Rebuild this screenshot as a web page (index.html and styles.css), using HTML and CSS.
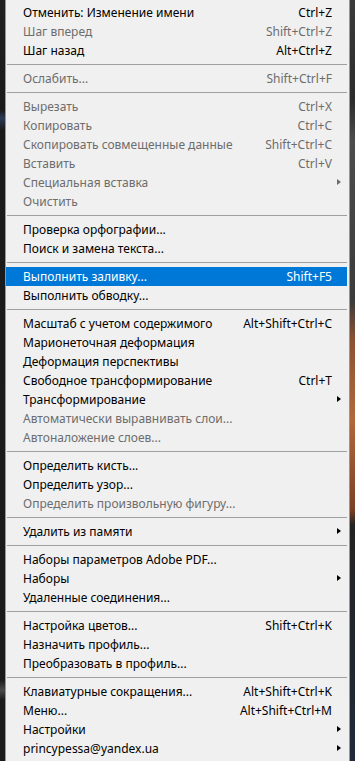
FILE: index.html
```html
<!DOCTYPE html>
<html lang="ru">
<head>
    <meta charset="UTF-8">
    <meta name="viewport" content="width=device-width, initial-scale=1.0">
    <title>Редактирование</title>
    <link rel="stylesheet" href="styles.css">
</head>
<body>
    <div class="screen">
        <div class="edge edge-left"></div>

        <div class="menu">
            <div class="menu-item"><span class="label">Отменить: Изменение имени</span><span class="shortcut">Ctrl+Z</span><span class="arrow"></span></div>
            <div class="menu-item disabled"><span class="label">Шаг вперед</span><span class="shortcut">Shift+Ctrl+Z</span><span class="arrow"></span></div>
            <div class="menu-item"><span class="label">Шаг назад</span><span class="shortcut">Alt+Ctrl+Z</span><span class="arrow"></span></div>
            <div class="separator"></div>

            <div class="menu-item disabled"><span class="label">Ослабить...</span><span class="shortcut">Shift+Ctrl+F</span><span class="arrow"></span></div>
            <div class="separator"></div>

            <div class="menu-item disabled"><span class="label">Вырезать</span><span class="shortcut">Ctrl+X</span><span class="arrow"></span></div>
            <div class="menu-item disabled"><span class="label">Копировать</span><span class="shortcut">Ctrl+C</span><span class="arrow"></span></div>
            <div class="menu-item disabled"><span class="label">Скопировать совмещенные данные</span><span class="shortcut">Shift+Ctrl+C</span><span class="arrow"></span></div>
            <div class="menu-item disabled"><span class="label">Вставить</span><span class="shortcut">Ctrl+V</span><span class="arrow"></span></div>
            <div class="menu-item disabled"><span class="label">Специальная вставка</span><span class="shortcut"></span><span class="arrow has-sub"></span></div>
            <div class="menu-item disabled"><span class="label">Очистить</span><span class="shortcut"></span><span class="arrow"></span></div>
            <div class="separator"></div>

            <div class="menu-item"><span class="label">Проверка орфографии...</span><span class="shortcut"></span><span class="arrow"></span></div>
            <div class="menu-item"><span class="label">Поиск и замена текста...</span><span class="shortcut"></span><span class="arrow"></span></div>
            <div class="separator"></div>

            <div class="menu-item selected"><span class="label">Выполнить заливку...</span><span class="shortcut">Shift+F5</span><span class="arrow"></span></div>
            <div class="menu-item"><span class="label">Выполнить обводку...</span><span class="shortcut"></span><span class="arrow"></span></div>
            <div class="separator"></div>

            <div class="menu-item"><span class="label">Масштаб с учетом содержимого</span><span class="shortcut">Alt+Shift+Ctrl+C</span><span class="arrow"></span></div>
            <div class="menu-item"><span class="label">Марионеточная деформация</span><span class="shortcut"></span><span class="arrow"></span></div>
            <div class="menu-item"><span class="label">Деформация перспективы</span><span class="shortcut"></span><span class="arrow"></span></div>
            <div class="menu-item"><span class="label">Свободное трансформирование</span><span class="shortcut">Ctrl+T</span><span class="arrow"></span></div>
            <div class="menu-item"><span class="label">Трансформирование</span><span class="shortcut"></span><span class="arrow has-sub"></span></div>
            <div class="menu-item disabled"><span class="label">Автоматически выравнивать слои...</span><span class="shortcut"></span><span class="arrow"></span></div>
            <div class="menu-item disabled"><span class="label">Автоналожение слоев...</span><span class="shortcut"></span><span class="arrow"></span></div>
            <div class="separator"></div>

            <div class="menu-item"><span class="label">Определить кисть...</span><span class="shortcut"></span><span class="arrow"></span></div>
            <div class="menu-item"><span class="label">Определить узор...</span><span class="shortcut"></span><span class="arrow"></span></div>
            <div class="menu-item disabled"><span class="label">Определить произвольную фигуру...</span><span class="shortcut"></span><span class="arrow"></span></div>
            <div class="separator"></div>

            <div class="menu-item"><span class="label">Удалить из памяти</span><span class="shortcut"></span><span class="arrow has-sub"></span></div>
            <div class="separator"></div>

            <div class="menu-item"><span class="label">Наборы параметров Adobe PDF...</span><span class="shortcut"></span><span class="arrow"></span></div>
            <div class="menu-item"><span class="label">Наборы</span><span class="shortcut"></span><span class="arrow has-sub"></span></div>
            <div class="menu-item"><span class="label">Удаленные соединения...</span><span class="shortcut"></span><span class="arrow"></span></div>
            <div class="separator"></div>

            <div class="menu-item"><span class="label">Настройка цветов...</span><span class="shortcut">Shift+Ctrl+K</span><span class="arrow"></span></div>
            <div class="menu-item"><span class="label">Назначить профиль...</span><span class="shortcut"></span><span class="arrow"></span></div>
            <div class="menu-item"><span class="label">Преобразовать в профиль...</span><span class="shortcut"></span><span class="arrow"></span></div>
            <div class="separator"></div>

            <div class="menu-item"><span class="label">Клавиатурные сокращения...</span><span class="shortcut">Alt+Shift+Ctrl+K</span><span class="arrow"></span></div>
            <div class="menu-item"><span class="label">Меню...</span><span class="shortcut">Alt+Shift+Ctrl+M</span><span class="arrow"></span></div>
            <div class="menu-item"><span class="label">Настройки</span><span class="shortcut"></span><span class="arrow has-sub"></span></div>
            <div class="menu-item"><span class="label">princypessa@yandex.ua</span><span class="shortcut"></span><span class="arrow has-sub"></span></div>
        </div>

        <div class="edge edge-right"></div>
    </div>
</body>
</html>
```

FILE: styles.css
```css
:root {
    --menu-bg: #f0f0f0;
    --menu-border: #979797;
    --text-color: #000000;
    --disabled-color: #6d6d6d;
    --highlight: #0078d7;
    --row-height: 19px;
}

body {
    margin: 0;
    background-color: #1c1c1c;
    font-family: "Noto Sans", "Open Sans", sans-serif;
    font-size: 12px;
    overflow: hidden;
}

.screen {
    display: flex;
    height: 761px;
    width: 355px;
}

.edge {
    width: 5px;
    flex-shrink: 0;
}

.edge-left {
    background: linear-gradient(to bottom, #202020 0, #1a1a1a 110px, #2b3a55 118px, #1a1a1a 130px, #1b1b1b 680px, #4a4a4a 690px, #1b1b1b 700px);
}

.edge-right {
    background: linear-gradient(to bottom, #3a3a3a 0, #2c2c2c 100px, #4c4c4c 140px, #3b3b3b 300px, #8a5233 340px, #b0683c 420px, #7a3f26 510px, #232323 525px, #1f2a3a 761px);
}

.menu {
    flex: 1;
    background-color: var(--menu-bg);
    border-left: 1px solid var(--menu-border);
    border-right: 1px solid var(--menu-border);
    padding: 3px 2px 3px 0;
    display: flex;
    flex-direction: column;
}

.menu-item {
    display: flex;
    align-items: center;
    height: var(--row-height);
    padding-left: 17px;
    color: var(--text-color);
    white-space: nowrap;
}

.menu-item .label {
    flex: 1;
}

.menu-item .shortcut {
    text-align: right;
}

.menu-item .arrow {
    width: 15px;
    height: 7px;
    flex-shrink: 0;
}

.menu-item .arrow.has-sub::before {
    content: "";
    display: block;
    margin-left: 5px;
    width: 0;
    height: 0;
    border-top: 3.5px solid transparent;
    border-bottom: 3.5px solid transparent;
    border-left: 4px solid #000;
}

.menu-item.disabled {
    color: var(--disabled-color);
}

.menu-item.disabled .arrow.has-sub::before {
    border-left-color: var(--disabled-color);
}

.menu-item.selected {
    background-color: var(--highlight);
    color: #fff;
}

.separator {
    height: 9px;
    margin-left: 1px;
    display: flex;
    align-items: center;
}

.separator::before {
    content: "";
    flex: 1;
    height: 1px;
    background-color: #a0a0a0;
}
```
